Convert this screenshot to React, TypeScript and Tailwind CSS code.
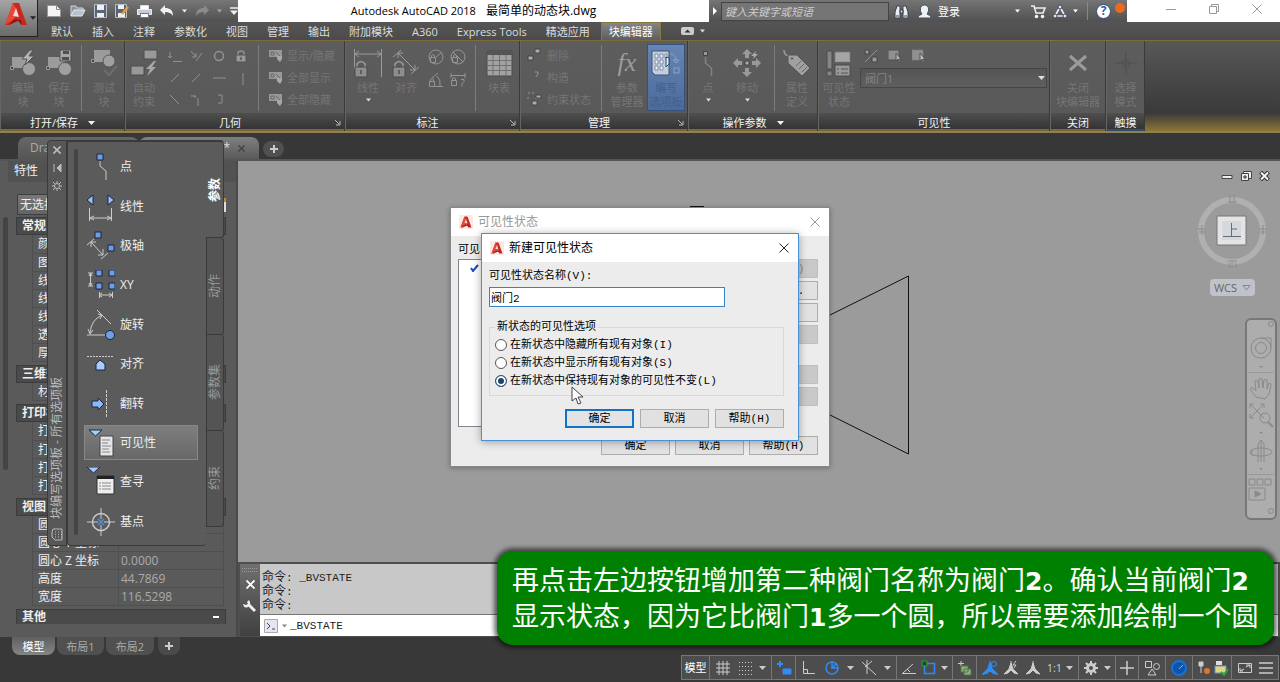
import React, { useState } from 'react';

type IconProps = { w?: number; h?: number; box?: string; className?: string; children: React.ReactNode };

const Icon = ({ w = 16, h = 16, box, className = '', children }: IconProps) => (
  <svg
    width={w}
    height={h}
    viewBox={box ?? `0 0 ${w} ${h}`}
    fill="none"
    stroke="currentColor"
    className={`shrink-0 ${className}`}
    aria-hidden="true"
  >
    {children}
  </svg>
);

const Caret = ({ className = '' }: { className?: string }) => (
  <Icon w={7} h={4} className={className}>
    <path d="M0 0h7L3.500 4z" fill="currentColor" stroke="none" />
  </Icon>
);

const LogoA = ({ size = 16 }: { size?: number }) => (
  <Icon w={size} h={size} box="0 0 24 24">
    <path d="M1 23 9 1h6l8 22h-6l-2-5-5-1-4 6z" fill="#c9281e" stroke="none" />
    <path d="M9 1 1 23l9-6 3-9z" fill="#e5473a" stroke="none" />
    <path d="m12 6 3 9-6-1z" fill="#f7d9d4" stroke="none" />
    <path d="m5 23 5-6 7 1 1 5-4-4z" fill="#8e1710" stroke="none" />
  </Icon>
);

const Close = ({ size = 10, width = 1 }: { size?: number; width?: number }) => (
  <Icon w={size} h={size} box="0 0 10 10">
    <path d="m.5.5 9 9m0-9-9 9" strokeWidth={width} />
  </Icon>
);

/* ---------- title bar ---------- */

const QuickAccess = () => (
  <div className="flex w-[200px] shrink-0 items-center gap-2 bg-linear-to-b from-[#777] to-[#505050] pl-2 text-[#eee]">
    <button aria-label="新建"><Icon w={16} h={14}><path d="M1.500 1.500h9l4 4v7h-13z" fill="#f4f4f4" stroke="#999" /><path d="M10.500 1.500v4h4" stroke="#888" /></Icon></button>
    <button aria-label="打开"><Icon w={16} h={14}><path d="M1 12V2h5l1 2h6v2" fill="#8b93a0" stroke="#d0d6de" /><path d="m1 12 3-6h11l-3 6z" fill="#b9c1cc" stroke="#e6e9ee" /></Icon></button>
    <button aria-label="保存"><Icon w={13} h={14}><path d="M.5.5h12v13H.5z" fill="#5b6575" stroke="#b9c0cc" /><path d="M3 1h7v5H3zM3 9h7v4H3z" fill="#f0f0f0" stroke="none" /></Icon></button>
    <button aria-label="另存为"><Icon w={14} h={14}><path d="M.5.500h11v13H.5z" fill="#5b6575" stroke="#b9c0cc" /><path d="M3 1h6v4H3zM3 9h7v4H3z" fill="#f0f0f0" stroke="none" /><path d="m13 3-6 7" stroke="#e2a23a" strokeWidth="2.500" /></Icon></button>
    <button aria-label="打印"><Icon w={15} h={14}><path d="M3.500 5V1.500h8V5" fill="#fff" stroke="#ddd" /><path d="M.5 5.500h14v5H.5z" fill="#c5ccd6" stroke="#eee" /><path d="M3.500 9.500h8v4h-8z" fill="#fff" stroke="#6b7686" /></Icon></button>
    <button aria-label="放弃" className="flex items-center gap-2"><Icon w={14} h={12}><path d="M5 0v3c5 0 8 2 8 8-2-3-4-4-8-4v3L0 5z" fill="#f2f2f2" stroke="none" /></Icon><Caret className="w-[5px]" /></button>
    <button aria-label="重做" className="flex items-center gap-2 text-[#aaa]"><Icon w={14} h={12}><path d="M9 0v3C4 3 1 5 1 11c2-3 4-4 8-4v3l5-5z" fill="#8b8b8b" stroke="none" /></Icon><Caret className="w-[5px]" /></button>
    <button aria-label="自定义"><Icon w={8} h={8}><path d="M0 1h8" strokeWidth="1.500" /><path d="M0 3.500h8L4 8z" fill="currentColor" stroke="none" /></Icon></button>
  </div>
);

const InfoCenter = () => (
  <div className="flex w-[418px] shrink-0 items-center bg-linear-to-b from-[#757575] to-[#505050] text-white">
    <button aria-label="展开搜索" className="flex w-3 justify-center"><Icon w={4} h={8}><path d="M0 0v8l4-4z" fill="currentColor" stroke="none" /></Icon></button>
    <input
      aria-label="搜索"
      placeholder="键入关键字或短语"
      className="h-[19px] w-[168px] border border-[#444] bg-[#757575] px-[3px] text-[11px] italic leading-none placeholder:text-[#ccc]"
    />
    <button aria-label="查找" className="ml-[5px]"><Icon w={15} h={15}><path d="M1 14V8l2-6h3v12zM14 14V8l-2-6H9v12zM6 6h3v3H6z" fill="#e9edf4" stroke="#3d4450" /><path d="M2 12h3m5 0h3" stroke="#3d4450" /></Icon></button>
    <button className="ml-2 flex items-center gap-[6px] text-[11px] leading-none">
      <Icon w={15} h={15}><path d="M1 14c0-3 3-3 4-4-2-2-3-9 2.500-9S12 8 10 10c1 1 4 1 4 4z" fill="#eef1f6" stroke="#454d5b" /></Icon>
      登录
    </button>
    <button aria-label="登录选项" className="ml-[55px]"><Caret className="w-[5px]" /></button>
    <button aria-label="购物车" className="ml-[10px]"><Icon w={16} h={15}><path d="M1 2h3l2 7h7l2-5H5" stroke="#e9edf4" strokeWidth="1.600" /><circle cx="6.500" cy="12.500" r="1.300" fill="#fff" /><circle cx="12.500" cy="12.500" r="1.300" fill="#fff" /></Icon></button>
    <button aria-label="应用" className="ml-[6px] flex items-center gap-[5px]">
      <Icon w={16} h={15}><path d="M8 3 3 12h10z" stroke="#e9edf4" strokeWidth="1.600" /><circle cx="8" cy="3" r="2" fill="#dfe5f2" stroke="#3d4668" /><circle cx="3" cy="12" r="2" fill="#dfe5f2" stroke="#3d4668" /><circle cx="13" cy="12" r="2" fill="#dfe5f2" stroke="#3d4668" /></Icon>
      <Caret className="w-[5px]" />
    </button>
    <span className="ml-[9px] h-[18px] w-px bg-[#888]" />
    <button aria-label="帮助" className="ml-2 flex h-[15px] w-[15px] items-center justify-center rounded-full border border-[#2b4a72] bg-white text-[12px] font-bold leading-none text-[#1f5fae]">?</button>
    <span className="mb-[7px] ml-1 h-[10px] w-[10px] rounded-full bg-[#ea6a20]" />
  </div>
);

const MENU = ['默认', '插入', '注释', '参数化', '视图', '管理', '输出', '附加模块', 'A360', 'Express Tools', '精选应用'];

const Header = () => (
  <header className="flex h-10 bg-[#4b4b4b]">
    <button aria-label="应用程序菜单" className="flex h-[37px] w-[38px] shrink-0 items-start gap-[2px] border-b border-r border-[#222] bg-linear-to-b from-[#a5a5a5] to-[#6a6a6a] pl-1 pt-[2px] text-[#222]">
      <LogoA size={24} />
      <Caret className="mt-[14px] w-[6px]" />
    </button>
    <div className="flex min-w-0 flex-1 flex-col">
      <div className="flex h-[22px] bg-white">
        <QuickAccess />
        <h1 className="flex min-w-0 flex-1 items-center justify-center gap-[10px] whitespace-nowrap pb-px text-[12px] leading-none text-black">
          <span className="text-[11px]">Autodesk AutoCAD 2018</span>
          <span>最简单的动态块.dwg</span>
        </h1>
        <InfoCenter />
        <div className="flex w-[153px] shrink-0 items-center justify-between pb-1 pl-[39px] pr-[18px] text-[#999]">
          <button aria-label="最小化"><Icon w={10} h={10}><path d="M0 5.500h10" /></Icon></button>
          <button aria-label="还原"><Icon w={10} h={10}><path d="M.5 2.500h7v7h-7zM2.500 2.500v-2h7v7h-2" /></Icon></button>
          <button aria-label="关闭"><Close /></button>
        </div>
      </div>
      <nav className="flex h-[18px] gap-[3px] bg-linear-to-b from-[#555] to-[#4b4b4b] pl-[5px] text-[11px] leading-none text-[#ddd]">
        {MENU.map((m) => (
          <button key={m} className="px-2">{m}</button>
        ))}
        <button className="border border-b-0 border-[#8a7440] bg-linear-to-b from-[#858585] to-[#5e5e5e] px-[7px] text-white">块编辑器</button>
        <button aria-label="最小化功能区" className="ml-[17px] flex items-center gap-[6px]">
          <Icon w={13} h={8}><rect width="13" height="8" rx="2" fill="#ccc" stroke="none" /><path d="M3.500 5.500h6l-3-3z" fill="#333" stroke="none" /></Icon>
          <Caret className="w-[5px]" />
        </button>
      </nav>
    </div>
  </header>
);

/* ---------- ribbon ---------- */

type PanelProps = { title: string; width: string; corner?: boolean; drop?: boolean; blue?: boolean; children: React.ReactNode };

const Panel = ({ title, width, corner, drop, blue, children }: PanelProps) => (
  <section className={`flex shrink-0 flex-col border-r border-r-[#3a3a3a] border-l border-l-[#656565] ${width}`}>
    <div className="flex flex-1 bg-linear-to-b from-[#5d5d5d] to-[#595959]">{children}</div>
    <h2
      className={`flex h-[18px] items-center border-b-2 bg-linear-to-b from-[#4f4f4f] to-[#343434] pt-[3px] text-[11px] leading-none text-[#f2f2f2] ${
        blue ? 'border-b-[#33506a]' : 'border-b-[#7b673a]'
      }`}
    >
      <span className="flex flex-1 items-center justify-center gap-[10px]">{title}{drop && <Caret />}</span>
      {corner && <Icon w={7} h={7} className="mr-[3px] text-[#bbb]"><path d="m1 1 4 4M6 2v4H2" /></Icon>}
    </h2>
  </section>
);

type BigProps = { lines: string[]; width: string; caret?: boolean; active?: boolean; children: React.ReactNode };

const Big = ({ lines, width, caret, active, children }: BigProps) => (
  <button
    className={`flex shrink-0 flex-col items-center whitespace-nowrap text-[11px] leading-[14px] ${width} ${
      active
        ? 'mb-[2px] mt-[3px] border border-[#35527c] bg-linear-to-b from-[#6685b3] to-[#4c6a9a] pt-[3px] text-[#43618d]'
        : 'pt-[7px] text-[#757575]'
    }`}
  >
    <span className={`flex h-[30px] items-center ${active ? 'text-[#c2d0e4]' : 'text-[#9b9b9b]'}`}>{children}</span>
    <span className="mt-[3px]">{lines[0]}</span>
    {lines[1] && <span>{lines[1]}</span>}
    {caret && <Caret className="mt-[3px] w-[5px] text-[#ddd]" />}
  </button>
);

const Sep = () => <span className="mb-[2px] mt-1 w-px shrink-0 bg-[#7c7c7c]" />;

const Row = ({ label, children }: { label: string; children: React.ReactNode }) => (
  <button className="flex h-[22px] items-center gap-1 whitespace-nowrap text-[11px] leading-none text-[#757575]">
    <span className="text-[#959595]">{children}</span>
    {label}
  </button>
);

const geometry = [
  <path d="M2 3v6m-2-2 2 2 2-2M5 12.500h9" />,
  <path d="m1 2 5 6m0-4v4H2m4 4 6-8" />,
  <circle cx="7" cy="7" r="4.500" strokeWidth="1.500" />,
  <><path d="M4 6V4q0-2 3-2t3 2v2" strokeWidth="1.500" /><path d="M2 6h10v7H2z" fill="#9a9a9a" stroke="#555" /><path d="M7 8v3" stroke="#333" /></>,
  <path d="m3 11 8-8" />,
  <path d="m2 11 8-8" />,
  <path d="M1 7h13" />,
  <path d="M9 2v12" />,
  <path d="m2 2 9 9" />,
  <path d="M1 3h5m2 2v8M5 3v2" />,
  <path d="M6 2h4v8H6" />,
];

const dims = [
  <><circle cx="8" cy="8" r="7" /><path d="M2.500 8.500h5v5h-5zM3.500 8V6.500q1.500-2 3 0V8M8 8l5-4" /></>,
  <><circle cx="8" cy="8" r="7" /><path d="M2.500 8.500h5v5h-5zM3.500 8V6.500q1.500-2 3 0V8M3 3l10 10" /></>,
  <path d="M1.500 9.500h5v5h-5zM2.500 9V7.500q1.500-2 3 0V9M4 6l6-5m-1 3q4 4 3 10M7 14.500h8" />,
  <path d="M1.500 8.500h5v5h-5zM2.500 8V6.500q1.500-2 3 0V8M1 1v5m14-5v5M1 3.500h14m-4 4h3v2l-2 2v3" />,
];

const BlockShape = ({ extra }: { extra: React.ReactNode }) => (
  <Icon w={28} h={28}>
    <path d="M3 8h17v11H3z" fill="#9b9b9b" stroke="none" />
    <circle cx="20" cy="20" r="6.500" fill="#a0a0a0" stroke="#5b5b5b" />
    <path d="M1.500 17.500h3v3h-3z" fill="#444" />
    {extra}
  </Icon>
);

const EyeBlock = () => (
  <Icon w={14} h={13}>
    <path d="M0 1h13v7H0z" fill="#989898" stroke="none" />
    <path d="M2 3h3v3H2zM7 3l4 4" stroke="#6a6a6a" />
    <path d="M8 7h5v3l-2 3-3-3z" fill="#a8a8a8" stroke="none" />
  </Icon>
);

const Ribbon = () => {
  const [state, setState] = useState('阀门1');
  return (
    <div className="flex h-[93px] border-b-2 border-t border-b-[#8f8055] border-t-[#7d6b3d] bg-[#5b5b5b]">
      <Panel title="打开/保存" width="w-[125px]" drop>
        <Big lines={['编辑', '块']} width="ml-1 w-9">
          <BlockShape extra={<path d="m21 1-8 9h5l-2 6 9-9h-5l4-6z" fill="#b5b5b5" stroke="#555" />} />
        </Big>
        <Big lines={['保存', '块']} width="w-9">
          <BlockShape extra={<><path d="M15 1h11v11H15z" fill="#a6a6a6" stroke="#505050" /><path d="M18 2h6v3h-6zM17 8h7v3h-7z" fill="#4f4f4f" stroke="none" /></>} />
        </Big>
        <span className="w-1" /><Sep /><span className="w-1" />
        <Big lines={['测试', '块']} width="w-9">
          <Icon w={28} h={28}>
            <path d="M4 1h16v12H4z" fill="#9b9b9b" stroke="none" />
            <path d="M1.500 10.500h3v3h-3z" fill="#444" />
            <circle cx="19" cy="12" r="6" fill="#a0a0a0" stroke="#5b5b5b" />
            <path d="m14 21 5 5 8-9" stroke="#6e6e6e" strokeWidth="2" />
          </Icon>
        </Big>
      </Panel>

      <Panel title="几何" width="w-[220px]" corner>
        <Big lines={['自动', '约束']} width="w-9">
          <Icon w={28} h={28}>
            <path d="M14 1h13v9H14zM1 17h13v9H1z" fill="#999" stroke="#4c4c4c" />
            <path d="m24 12-8 8h4l-3 7 9-9h-4l4-6z" fill="#a8a8a8" stroke="none" />
          </Icon>
        </Big>
        <div className="ml-[2px] grid grid-cols-4 content-start pt-1 text-[#929292]">
          {geometry.map((g, i) => (
            <button key={i} aria-label={`几何约束 ${i + 1}`} className="flex h-[22px] w-[22px] items-center justify-center">
              <Icon w={14} h={14}>{g}</Icon>
            </button>
          ))}
        </div>
        <span className="w-[6px]" /><Sep />
        <div className="ml-[10px] pt-[3px]">
          <Row label="显示/隐藏"><EyeBlock /></Row>
          <Row label="全部显示"><EyeBlock /></Row>
          <Row label="全部隐藏"><EyeBlock /></Row>
        </div>
      </Panel>

      <Panel title="标注" width="w-[175px]" corner>
        <Big lines={['线性']} width="ml-[2px] w-10" caret>
          <Icon w={30} h={29}>
            <path d="M1.500 0v20M28.500 0v28M2 5h26M6 2 2 5l4 3m18-6 4 3-4 3" />
            <path d="M4 18v-3q4-5 8 0v3" strokeWidth="1.500" />
            <path d="M2 18h12v10H2z" fill="#8d8d8d" stroke="#4b4b4b" /><path d="M8 21v4" stroke="#333" />
          </Icon>
        </Big>
        <Big lines={['对齐']} width="w-9">
          <Icon w={28} h={29}>
            <path d="m1 8 8-7m10 24 8-7M6 4l17 17M6 9V4h5m12 12v5h-5" />
            <path d="M3 18v-3q4-5 8 0v3" strokeWidth="1.500" />
            <path d="M1 18h12v10H1z" fill="#8d8d8d" stroke="#4b4b4b" /><path d="M7 21v4" stroke="#333" />
          </Icon>
        </Big>
        <div className="grid grid-cols-2 content-start pt-1 text-[#959595]">
          {dims.map((d, i) => (
            <button key={i} aria-label={`标注约束 ${i + 1}`} className="flex h-[23px] w-[23px] items-center justify-center">
              <Icon w={16} h={16}>{d}</Icon>
            </button>
          ))}
        </div>
        <span className="w-[6px]" /><Sep />
        <Big lines={['块表']} width="ml-[3px] w-10">
          <Icon w={27} h={27}>
            <path d="M1 1h25v25H1z" fill="#a2a2a2" stroke="#4a4a4a" />
            <path d="M1 1h25v4H1z" fill="#555" stroke="none" />
            <path d="M7 5v21m6.500-21v21M20 5v21M1 10.500h25M1 15.500h25M1 20.500h25" stroke="#707070" />
          </Icon>
        </Big>
      </Panel>

      <Panel title="管理" width="w-[168px]" corner>
        <div className="ml-[6px] w-[74px] pt-[3px]">
          <Row label="删除"><Icon w={16} h={14}><path d="M8 1h5v4H8zM1 8h5v4H1z" fill="#aaa" stroke="#444" /></Icon></Row>
          <Row label="构造"><Icon w={16} h={14}><path d="M8 2h3v2L9 7" /></Icon></Row>
          <Row label="约束状态"><Icon w={16} h={14}><path d="M1 1h2M5 1h2M1 5v2M13 3v3H9v3" strokeDasharray="2 1" /><path d="M9 3h5v3H9zM5 9h5v4H5z" fill="#aaa" stroke="#444" /></Icon></Row>
        </div>
        <Sep />
        <Big lines={['参数', '管理器']} width="ml-[5px] w-10">
          <span className="[font-family:'Liberation_Serif',serif] text-[26px] italic leading-none">fx</span>
        </Big>
        <Big lines={['编写', '选项板']} width="w-[38px]" active>
          <Icon w={30} h={28}>
            <path d="M1 2h17v24H4l-3-3z" fill="#c3cddc" stroke="#3d5477" />
            <path d="M4 5h3v4H4zM9 5h3v4H9zM14 5h2v4h-2zM4 11h3v4H4zM9 11h3v4H9zM4 17h3v4H4zM9 17h3v4H9z" fill="#eef2f8" stroke="#7e8fa9" />
            <path d="M15 8v10l3-3V9z" fill="#e6edf7" stroke="#2c456b" />
            <path d="M19 5q6 0 6 6m-3 0h6l-3 3zM23 19h5v5h-5z" stroke="#8ca4c8" />
          </Icon>
        </Big>
      </Panel>

      <Panel title="操作参数" width="w-[130px]" drop>
        <Big lines={['点']} width="w-[38px]" caret>
          <Icon w={12} h={28}><path d="M1.500 2.500h4v4h-4z" fill="#999" stroke="#444" /><path d="M3.500 8v6l6 5v8" stroke="#828282" strokeWidth="1.500" /></Icon>
        </Big>
        <Big lines={['移动']} width="w-10" caret>
          <Icon w={28} h={28}>
            <path d="m14 0 5 5h-3v4h-4V5H9zM14 28l5-5h-3v-4h-4v4H9zM0 14l5-5v3h4v4H5v3zM28 14l-5-5v3h-4v4h4v3z" fill="#999" stroke="none" />
            <path d="M12 12h4v4h-4z" fill="#aaa" stroke="#444" />
            <path d="m23 2-5 5h3l-1 3 5-5h-3z" fill="#aaa" stroke="none" />
          </Icon>
        </Big>
        <span className="w-[7px]" /><Sep />
        <Big lines={['属性', '定义']} width="ml-[3px] w-[38px]">
          <Icon w={28} h={28}>
            <path d="M1 1q0 6 6 6" strokeWidth="1.500" />
            <path d="M5 6h9l13 13-8 8L5 14z" fill="#a0a0a0" stroke="#555" />
            <circle cx="9" cy="9.500" r="1.500" fill="#555" />
            <path d="m13 17 5-5m-2 8 5-5m-2 8 5-5" stroke="#666" />
          </Icon>
        </Big>
      </Panel>

      <Panel title="可见性" width="w-[232px]">
        <Big lines={['可见性', '状态']} width="ml-[2px] w-9">
          <Icon w={26} h={27}>
            <path d="M1 1h5v18H1zM1 21h5v5H1z" fill="#858585" stroke="#4c4c4c" />
            <path d="M9 2h15v10H9z" fill="#a5a5a5" stroke="#777" strokeDasharray="2 1" />
            <path d="M9 15h15v11H9z" fill="#999" stroke="#4c4c4c" />
            <path d="M11 19h2m2 0h7m-11 4h2m2 0h7" stroke="#555" />
          </Icon>
        </Big>
        <div className="ml-[3px] flex flex-1 flex-col pr-[2px] pt-[6px]">
          <div className="flex h-[18px] items-center gap-[10px] pl-1 text-[#8f8f8f]">
            <button aria-label="可见性模式"><Icon w={14} h={14}><path d="m1 13 12-12" /><path d="M1 1h4v4H1zM8 8h5v5H8z" fill="#999" stroke="#444" /></Icon></button>
            <button aria-label="使可见"><Icon w={14} h={14}><path d="M0 1h11v10H0z" fill="#909090" stroke="#505050" /><path d="M8 4v8l2-2 2 4 1-1-2-3h2z" fill="#b5b5b5" stroke="#555" /></Icon></button>
            <button aria-label="使不可见"><Icon w={14} h={14}><path d="M0 1h11v10H0z" fill="#909090" stroke="#808080" strokeDasharray="2 1" /><path d="M8 4v8l2-2 2 4 1-1-2-3h2z" fill="#c5c5c5" stroke="#555" /></Icon></button>
          </div>
          <label className="relative mt-[3px] flex items-center">
            <select
              aria-label="可见性状态"
              value={state}
              onChange={(e) => setState(e.target.value)}
              className="h-5 w-full appearance-none border border-[#464646] bg-linear-to-b from-[#555] to-[#5f5f5f] px-1 text-[11px] leading-none text-[#858585]"
            >
              <option>阀门1</option>
            </select>
            <Caret className="pointer-events-none absolute right-[2px] text-[#ddd]" />
          </label>
        </div>
      </Panel>

      <Panel title="关闭" width="w-14">
        <Big lines={['关闭', '块编辑器']} width="w-[54px]">
          <Icon w={20} h={18}><path d="m2 2 16 14M18 2 2 16" strokeWidth="3" /></Icon>
        </Big>
      </Panel>
      <Panel title="触摸" width="w-[39px]" blue>
        <Big lines={['选择', '模式']} width="w-[37px]">
          <Icon w={24} h={24} className="text-[#515151]"><path d="M12 1v22M1 12h22" strokeWidth="1.500" /><path d="M9 9h6v6H9z" /></Icon>
        </Big>
      </Panel>
      <div className="flex-1 bg-linear-to-b from-[#585858] via-[#3a3a3a] via-80% to-[#8f7532]" />
    </div>
  );
};

/* ---------- document tabs and properties ---------- */

const DocTabs = () => (
  <div className="flex h-7 items-end border-b-2 border-[#555] bg-[#373737] pl-[18px] text-[12px] leading-none text-[#aaa]">
    <button className="h-[22px] w-[121px] rounded-t-lg bg-linear-to-b from-[#676767] to-[#555] pl-3 text-left">Drawing1</button>
    <button className="flex h-[22px] w-[120px] items-center justify-end gap-2 rounded-t-lg bg-linear-to-b from-[#808080] to-[#5a5a5a] pr-[14px] text-[#ddd]">
      最简单的动态块*
      <span className="text-[#444]"><Close size={7} width={2} /></span>
    </button>
    <button aria-label="新图形" className="mb-[2px] ml-1 flex h-4 w-[21px] items-center justify-center rounded-lg bg-[#505050] text-[#ccc]">
      <Icon w={8} h={8}><path d="M4 0v8M0 4h8" strokeWidth="2" /></Icon>
    </button>
  </div>
);

type Prop = [string, string];

const PROPS: { title: string; rows: Prop[] }[] = [
  { title: '常规', rows: [['颜色', ''], ['图层', ''], ['线型', ''], ['线型比例', ''], ['线宽', ''], ['透明度', ''], ['厚度', '']] },
  { title: '三维效果', rows: [['材质', '']] },
  { title: '打印样式', rows: [['打印样式', ''], ['打印样式表', ''], ['打印表附着', ''], ['打印表类型', '']] },
  { title: '视图', rows: [['圆心 X 坐标', ''], ['圆心 Y 坐标', ''], ['圆心 Z 坐标', '0.0000'], ['高度', '44.7869'], ['宽度', '116.5298']] },
];

const Properties = () => (
  <aside className="flex w-[238px] shrink-0 flex-col border-r-2 border-[#4a4a4a] bg-[#5a5a5a] text-[12px] text-[#eee]">
    <h2 className="ml-2 h-[21px] bg-[#525252] pl-[6px] leading-[19px]">特性</h2>
    <div className="mt-3 flex pl-[17px]">
      <button className="h-[21px] w-[183px] border border-[#3f3f3f] bg-linear-to-b from-[#777] to-[#646464] pl-[2px] text-left leading-none">无选择</button>
      <span className="ml-[22px] mt-1 h-[14px] w-1 border-t-4 border-t-[#c58a35] bg-[#ddd]" />
    </div>
    <div className="mt-[2px] flex">
      <span className="ml-[3px] h-[253px] w-[5px] shrink-0 rounded-sm bg-[#444]" />
      <div className="ml-2 flex w-[210px] flex-col gap-[3px]">
        {PROPS.map((g) => (
          <section key={g.title}>
            <h3 className="h-[18px] border border-[#3c3c3c] bg-[#4a4a4a] pl-[5px] font-bold leading-[16px]">{g.title}</h3>
            <table className="ml-4 w-[192px] table-fixed border-collapse border-r border-[#4f4f4f]">
              <tbody>
                {g.rows.map(([k, v]) => (
                  <tr key={k} className="h-[18px] border-b border-[#4f4f4f]">
                    <th scope="row" className="w-[86px] whitespace-nowrap border-x border-[#4f4f4f] p-0 pl-[5px] text-left font-normal leading-[17px]">{k}</th>
                    <td className="p-0 pl-[2px] leading-[17px] text-[#aaa]">{v}</td>
                  </tr>
                ))}
              </tbody>
            </table>
          </section>
        ))}
        <h3 className="flex h-[15px] items-center justify-between border border-b-0 border-[#3c3c3c] bg-[#4a4a4a] pl-[5px] pr-[6px] font-bold leading-none">
          其他
          <span className="h-[2px] w-[6px] bg-white" />
        </h3>
      </div>
    </div>
  </aside>
);

/* ---------- block authoring palette ---------- */

const N = '#6f9fe0';

const PARAMS: { label: string; icon: React.ReactNode }[] = [
  { label: '点', icon: <><path d="M13 9v5l6 5v9" /><path d="M10 2h6v6h-6z" fill={N} stroke="#16264a" /></> },
  { label: '线性', icon: <><path d="M2.500 16v13m22-13v13M3 26h21M7 24l-4 2 4 2m13-4 4 2-4 2" /><path d="m6 3-6 5 6 5zM21 3l6 5-6 5z" fill="#9cc3f5" stroke="#16264a" /></> },
  { label: '极轴', icon: <><path d="m0 14 7-6m7 20 7-6M4 11l12 13M4 16v-5h5m7 7v6h-5" /><path d="M8 1h6v6H8zM21 14h6v6h-6z" fill={N} stroke="#16264a" /></> },
  { label: 'XY', icon: <><path d="M1 3h5M1 16h5M3.500 3v13M2 6l1.500-3L5 6m-3 7 1.500 3L5 13M12.500 22v6m13-6v6M12 25h13m-10-2-3 2 3 2m7-4 3 2-3 2" /><path d="M9 0h6v6H9zM22 0h6v6h-6zM9 13h6v6H9zM22 13h6v6h-6z" fill={N} stroke="#16264a" /></> },
  { label: '旋转', icon: <><path d="M0 25h20M10 0l14 14M3 23Q4 10 15 5M1 19l2 5 3-4m5-16 4 1-2 4" /><circle cx="23" cy="25" r="4.500" fill={N} stroke="#16264a" /></> },
  { label: '对齐', icon: <><path d="M0 7.500h27" strokeDasharray="2 1" /><path d="M9 21v-6l4-4 5 4v6z" fill="#a9ccf8" stroke="#16264a" /></> },
  { label: '翻转', icon: <><path d="M19.500 1v28" strokeDasharray="3 1" /><path d="M5 12h6V9l6 6-6 6v-3H5z" fill="#8db8f2" stroke="#16264a" /></> },
  { label: '可见性', icon: <><path d="M13 8h13v20H13z" fill="#e5e5ea" stroke="#444" /><path d="M15 12h8m-8 3h6m-6 3h9m-9 3h7m-7 3h8" stroke="#888" /><path d="M2 2h13L8.500 8z" fill="#a9ccf8" stroke="#16264a" /></> },
  { label: '查寻', icon: <><path d="M10 9h17v18H10z" fill="#eee" stroke="#333" /><path d="M10 9h17v3H10z" fill="#222" stroke="none" /><path d="M12 16h2m1 0h9m-12 3h2m1 0h9m-12 3h2m1 0h9" stroke="#888" /><path d="M0 0h13L6.500 6z" fill="#a9ccf8" stroke="#16264a" /></> },
  { label: '基点', icon: <><circle cx="14" cy="15" r="8.500" strokeWidth="1.500" /><path d="M14 1v11m0 6v11M0 15h11m6 0h11" /><path d="m11 12 6 6m0-6-6 6" stroke="#4c8fe8" strokeWidth="1.500" /></> },
];

const VERTICAL = '[writing-mode:vertical-rl] [text-orientation:sideways] rotate-180';

const AuthoringPalette = () => {
  const [picked, setPicked] = useState('可见性');
  const [tab, setTab] = useState('参数');
  return (
    <div className="absolute left-[47px] top-[140px] z-10 flex h-[406px] text-[12px] leading-none text-[#eee]">
      <div className="flex w-5 flex-col items-center rounded-l border border-[#3a3a3a] bg-[#575757] pb-1 pt-[5px] text-[#bbb]">
        <button aria-label="关闭"><Close size={8} width={2} /></button>
        <button aria-label="自动隐藏" className="mt-[10px]"><Icon w={9} h={8}><path d="M1 0v8M8 0 4 4l4 4z" fill="currentColor" /></Icon></button>
        <button aria-label="特性" className="mt-[9px]"><Icon w={10} h={10}><circle cx="5" cy="5" r="2.500" /><path d="M5 0v2m0 6v2M0 5h2m6 0h2M1 1l2 2m4 4 2 2m0-8L7 3M3 7 1 9" /></Icon></button>
        <h2 className={`mt-auto whitespace-nowrap ${VERTICAL}`}>块编写选项板 - 所有选项板</h2>
        <Icon w={12} h={13} className="mt-[9px]"><path d="M2 1h9v11H4L1 9V4z" /><path d="M4 4h1m2 0h1m2 0h1M4 6.500h1m2 0h1m2 0h1M4 9h1m2 0h1m2 0h1" /></Icon>
      </div>
      <div className="flex w-[139px] rounded-b border border-r-0 border-[#3a3a3a] border-t-2 bg-[#5b5b5b] pb-1 pt-[5px]">
        <span className="mb-[6px] ml-[6px] mt-[2px] w-1 rounded bg-[#444]" />
        <div className="ml-[6px] flex w-[114px] flex-col">
          {PARAMS.map((p) => (
            <button
              key={p.label}
              onClick={() => setPicked(p.label)}
              className={`flex flex-1 items-center gap-[5px] border-y-2 border-[#5b5b5b] pl-[3px] pt-px ${
                picked === p.label ? 'bg-linear-to-b from-[#7f7f7f] to-[#676767] shadow-[inset_0_0_0_1px_#888]' : ''
              }`}
            >
              <Icon w={28} h={30} className="text-[#ccc]">{p.icon}</Icon>
              {p.label}
            </button>
          ))}
        </div>
      </div>
      <div role="tablist" className="flex h-[387px] w-[18px] flex-col rounded-r border-t-2 border-[#3a3a3a]">
        {['参数', '动作', '参数集', '约束'].map((t) => (
          <button
            key={t}
            role="tab"
            aria-selected={tab === t}
            onClick={() => setTab(t)}
            className={`flex flex-1 items-center justify-center rounded-r border-b border-r border-[#3a3a3a] ${
              tab === t ? 'bg-[#5b5b5b] font-bold text-white' : 'border-l bg-[#545454] text-[#9a9a9a]'
            }`}
          >
            <span className={VERTICAL}>{t}</span>
          </button>
        ))}
      </div>
    </div>
  );
};

/* ---------- drawing area ---------- */

const ViewCube = () => (
  <Icon w={70} h={74}>
    <circle cx="35" cy="37" r="31" stroke="#b0b0b0" strokeWidth="6" />
    <path d="M20 22h29v29H20z" fill="#e4e4e4" stroke="#777" />
    <path d="M25 27h19v19H25z" fill="#d5d8dd" stroke="none" />
    <path d="M34.500 29v13M26 42.500h18M35 35h5" stroke="#646b76" />
    <path d="M33 1v8m4-8v8m-6-1h9M1 35h7m-6 3h7m-4-7v10M62 35h8m-7 3h6m-3-7v10M31 67h9m-8 2v6m3-7v7m4-6v6" stroke="#8b8b8b" />
  </Icon>
);

const NavBar = () => (
  <div className="absolute right-[3px] top-[157px] flex h-[202px] w-8 flex-col items-center rounded-md border-2 border-[#777] bg-[#adadad] text-[#8a8a8a]">
    <Icon w={28} h={196}>
      <circle cx="24" cy="4" r="2.500" />
      <path d="M4 28a10 10 0 1 1 10 10Q4 38 4 28zM14 18h10v10" />
      <circle cx="14" cy="28" r="5.500" />
      <path d="M12 46h4l-2 2zM12 112h4l-2 2zM12 148h4l-2 2z" fill="currentColor" stroke="none" />
      <path d="M1 52.500h26M1 154.500h26" stroke="#9b9b9b" />
      <path d="m9 77-6-8q1-2 3-1l3 3-1-10q2-1 3 0l1 7V59q2-1 3 0l1 9 1-8q2-1 3 0v9l2-6q2 0 2 2l-2 9-4 5z" />
      <path d="m3 84 14 14M17 84 3 98M3 88v-4h4m6 0h4v4M3 94v4h4" /><circle cx="18" cy="98" r="5" /><path d="m21 102 5 5" strokeWidth="2" />
      <path d="M14 120v22m-3 0v-18l3-4 3 4v18" /><ellipse cx="14" cy="132" rx="11" ry="4" /><path d="m6 131-3 2 3 3" />
      <path d="M2 159h6v6H2zM10 159h6v6h-6zM18 159h6v6h-6zM2 168h16v12H2z" /><path d="m8 171 6 3-6 3z" fill="currentColor" />
      <circle cx="24" cy="191" r="2.500" />
    </Icon>
  </div>
);

const Canvas = () => (
  <div className="relative flex-1 bg-[#9b9b9b]">
    <svg className="absolute left-[440px] top-[40px]" width="240" height="260" fill="none" stroke="#111" aria-hidden="true">
      <path d="M12 6h14" strokeWidth="2" />
      <path d="m144 118 86.500-43v178L144 210" />
    </svg>
    <div className="absolute right-[10px] top-[10px] flex gap-[7px] text-[#f4f4f4]">
      <button aria-label="最小化"><Icon w={12} h={10}><path d="M1 4.500h10v3H1z" fill="#eee" stroke="#444" /></Icon></button>
      <button aria-label="还原"><Icon w={12} h={10}><path d="M3.500.500h8v7h-8z" fill="#eee" stroke="#444" /><path d="M1.500 2.500h7v7h-7z" fill="#eee" stroke="#444" /><path d="M4 5h2v2H4z" stroke="#333" /></Icon></button>
      <button aria-label="关闭"><Icon w={11} h={10}><path d="m1.500 1 8 8m0-8-8 8" stroke="#333" strokeWidth="4" /><path d="m2 1.500 7 7m0-7-7 7" strokeWidth="2" /></Icon></button>
    </div>
    <div className="absolute right-[13px] top-[33px]"><ViewCube /></div>
    <button className="absolute right-[25px] top-[118px] flex h-[17px] items-center gap-[5px] rounded bg-[#bfc2ca] px-[4px] text-[11px] leading-none text-[#666]">
      WCS
      <Icon w={9} h={6}><path d="M1 .5h7L4.500 5z" stroke="#888" /></Icon>
    </button>
    <NavBar />
  </div>
);

const Prompt = ({ text }: { text?: string }) => (
  <p className="h-[14px] whitespace-pre leading-[14px]"><span className="text-[12px]">命令</span>: {text}</p>
);

const CommandLine = () => (
  <div className="flex h-[75px] border-2 border-b border-[#4f4f4f] [font-family:'Liberation_Mono','Noto_Sans_CJK_SC',monospace] text-[11px] text-[#222]">
    <div className="flex w-5 shrink-0 flex-col items-center bg-linear-to-b from-[#707070] to-[#404040] pt-1 text-white">
      <Icon w={16} h={5} className="text-[#999]"><path d="M0 .5h16M0 3.500h16" strokeDasharray="1 1" /></Icon>
      <button aria-label="关闭" className="mt-[7px]"><Close size={9} width={2} /></button>
      <button aria-label="自定义" className="mt-[10px]"><Icon w={14} h={14}><path d="m5 5 7 7" stroke="#eee" strokeWidth="3" /><path d="M6 1 4 3l1 2-2 1-3-1q1 5 5 3 4-2 1-7z" fill="#eee" stroke="none" /></Icon></button>
    </div>
    <div className="flex flex-1 flex-col">
      <div className="flex-1 bg-[#c8c8c8] pl-[2px] pt-[7px]">
        <Prompt text="_BVSTATE" />
        <Prompt />
        <Prompt />
      </div>
      <label className="flex h-[22px] items-center border-t border-[#777] bg-white pl-1">
        <Icon w={14} h={14}><path d="M.5.500h13v13H.5z" fill="#e4e5ee" stroke="#aaa" /><path d="m3 4 3 3-3 3m5 0h3" stroke="#444" /></Icon>
        <Caret className="ml-1 w-[5px] text-[#888]" />
        <input aria-label="命令" defaultValue="_BVSTATE" className="ml-[3px] min-w-0 flex-1 leading-none outline-none" />
      </label>
    </div>
  </div>
);

/* ---------- dialogs ---------- */

const DlgButton = ({ label, primary, dim }: { label: string; primary?: boolean; dim?: boolean }) => (
  <button
    className={`h-[19px] w-[69px] whitespace-nowrap pt-px leading-none ${
      primary
        ? 'border-2 border-[#1472c4] bg-[#e3e3e3]'
        : dim
          ? 'border border-[#bfbfbf] bg-[#c9c9c9] text-[#888]'
          : 'border border-[#adadad] bg-[#e1e1e1]'
    }`}
  >
    {label}
  </button>
);

const DlgTitle = ({ text, dim }: { text: string; dim?: boolean }) => (
  <div className="flex h-7 items-center bg-white pl-[8px] pr-[9px] text-[12px] leading-none">
    <span className="bg-[#fbe9e6] p-px"><LogoA size={12} /></span>
    <h2 className={`ml-[5px] flex-1 [font-family:'Open_Sans','Noto_Sans_CJK_SC',sans-serif] ${dim ? 'text-[#999]' : 'text-black'}`}>{text}</h2>
    <button aria-label="关闭" className={dim ? 'text-[#999]' : 'text-[#222]'}><Close /></button>
  </div>
);

const DLG_FONT = "[font-family:'Liberation_Mono','Noto_Sans_CJK_SC',monospace] text-[11px] text-black";

const VisibilityDialog = () => (
  <div role="dialog" className={`absolute left-[450px] top-[207px] z-20 flex h-[260px] w-[380px] flex-col border border-[#888] bg-[#ececec] shadow-[0_1px_5px_rgba(0,0,0,0.3)] ${DLG_FONT}`}>
    <DlgTitle text="可见性状态" dim />
    <div className="flex flex-1 justify-between pl-[7px] pr-[11px] pt-[6px]">
      <div className="flex-1">
        <p className="leading-[17px]">可见</p>
        <div className="h-[168px] w-[270px] border border-[#828790] bg-white pl-[11px] pt-1">
          <Icon w={9} h={8}><path d="m1 4 2 3 5-6" stroke="#1b49c0" strokeWidth="2" /></Icon>
        </div>
      </div>
      <div className="flex flex-col gap-[3px] pt-[17px]">
        <DlgButton label="当前(C)" dim />
        <DlgButton label="新建..." />
        <DlgButton label="重命名" />
        <DlgButton label="删除" dim />
        <span className="h-[15px]" />
        <DlgButton label="上移" dim />
        <DlgButton label="下移" dim />
      </div>
    </div>
    <div className="flex justify-end gap-[5px] pb-[11px] pr-[11px]">
      <DlgButton label="确定" />
      <DlgButton label="取消" />
      <DlgButton label="帮助(H)" />
    </div>
  </div>
);

const OPTIONS = ['在新状态中隐藏所有现有对象(I)', '在新状态中显示所有现有对象(S)', '在新状态中保持现有对象的可见性不变(L)'];

const NewStateDialog = () => {
  const [name, setName] = useState('阀门2');
  const [mode, setMode] = useState(2);
  return (
    <div role="dialog" className={`absolute left-[481px] top-[233px] z-30 flex h-[208px] w-[318px] flex-col border border-[#4a90d9] bg-[#ececec] shadow-[0_1px_8px_rgba(0,0,0,0.35)] ${DLG_FONT}`}>
      <DlgTitle text="新建可见性状态" />
      <div className="flex flex-1 flex-col pb-3 pl-[7px] pr-[14px] pt-[7px]">
        <label htmlFor="state-name" className="leading-[15px]">可见性状态名称(V):</label>
        <input
          id="state-name"
          value={name}
          onChange={(e) => setName(e.target.value)}
          className="mt-[3px] h-5 w-[236px] border border-[#3584c9] bg-white px-px leading-none outline-none"
        />
        <fieldset className="mt-[13px] h-[76px] border border-[#d8d8d8] pl-[5px]">
          <legend className="px-[2px] leading-[14px]">新状态的可见性选项</legend>
          <div className="flex flex-col pt-[2px]">
            {OPTIONS.map((o, i) => (
              <label key={o} className="flex h-[18px] items-center gap-[3px] whitespace-nowrap leading-none">
                <input
                  type="radio"
                  name="mode"
                  checked={mode === i}
                  onChange={() => setMode(i)}
                  className="h-3 w-3 shrink-0 appearance-none rounded-full border border-[#555] bg-white checked:border-[#2a5580] checked:bg-[#1d4468] checked:shadow-[inset_0_0_0_2px_#fff]"
                />
                {o}
              </label>
            ))}
          </div>
        </fieldset>
        <div className="mt-auto flex justify-end gap-[6px]">
          <DlgButton label="确定" primary />
          <DlgButton label="取消" />
          <DlgButton label="帮助(H)" />
        </div>
      </div>
      <svg className="absolute left-[89px] top-[152px]" width="14" height="19" aria-hidden="true">
        <path d="M1 1v14l4-3 2 6 3-1-3-6h5z" fill="#fff" stroke="#444" />
      </svg>
    </div>
  );
};

/* ---------- footer ---------- */

const Group = ({ width, children }: { width: string; children: React.ReactNode }) => (
  <div className={`flex shrink-0 items-center justify-around border-r border-[#777] px-[2px] ${width}`}>{children}</div>
);

const Tool = ({ name, on, children }: { name: string; on?: boolean; children: React.ReactNode }) => (
  <button aria-label={name} className={on ? 'text-[#2f8cf5]' : ''}><Icon>{children}</Icon></button>
);

const figure = 'M8 1v7m0-5 2 6 5 5-4-1-3-3-3 3-4 1 5-5z';

const StatusBar = () => (
  <div className="ml-auto mr-px flex h-[25px] w-fit border border-[#777] bg-[#4d4d4d] text-[11px] leading-none text-[#ccc]">
    <Group width="w-7"><button className="whitespace-nowrap text-white">模型</button></Group>
    <Group width="w-[62px]">
      <Tool name="栅格"><path d="M4 1v14m4-14v14m4-14v14M1 4h14M1 8h14M1 12h14" /></Tool>
      <Tool name="捕捉"><path d="M2 2.500h13M2 6.500h13M2 10.500h13M2 14.500h13" strokeDasharray="1 2" /></Tool>
      <Caret />
    </Group>
    <Group width="w-6"><Tool name="动态输入" on><path d="M4 1v6M1 4h6" strokeWidth="2" /><path d="M7 9h8v5H7z" fill="currentColor" /></Tool></Group>
    <Group width="w-[101px]">
      <Tool name="正交"><path d="M2.500 1v12.500H14M2 9.500h4.500V13" /></Tool>
      <Tool name="极轴" on><circle cx="8" cy="8" r="6" strokeWidth="1.500" /><path d="M8 2v6h7M8 8l4-4" strokeWidth="1.500" /></Tool>
      <Caret />
      <Tool name="等轴测"><path d="m1 2 14 13M6 0v14M11 1 4 7" /></Tool>
      <Caret />
    </Group>
    <Group width="w-14">
      <Tool name="对象追踪"><path d="M1 13.500h14M2 13 12 4M6 9l3 3" /></Tool>
      <Tool name="对象捕捉" on><path d="M3.500 3.500h10v10h-10z" strokeWidth="1.500" /><path d="M1 1h5v5H1z" fill="#194d23" stroke="#27a148" /></Tool>
      <Caret />
    </Group>
    <Group width="w-6"><Tool name="选择循环"><path d="M4 1v5M1 3.500h6" /><path d="M4 6h7v6H4zM7 9h7v6H7z" fill="#8db37a" stroke="#55704a" /></Tool></Group>
    <Group width="w-[102px]">
      <Tool name="注释可见性" on><path d={figure} fill="currentColor" strokeWidth="1.500" /><circle cx="12" cy="4" r="2.500" /></Tool>
      <Tool name="自动缩放"><path d={figure} fill="currentColor" /><path d="m13 1-3 4h3l-2 3" /></Tool>
      <Tool name="注释"><path d={figure} fill="currentColor" /></Tool>
      <button className="flex items-center gap-1 whitespace-nowrap">1:1 <Caret /></button>
    </Group>
    <Group width="w-[37px]">
      <Tool name="切换工作空间"><circle cx="8" cy="8" r="3.500" strokeWidth="3" /><path d="M8 1v3m0 8v3M1 8h3m8 0h3M3 3l2 2m6 6 2 2m0-10-2 2M5 11l-2 2" strokeWidth="2" /></Tool>
      <Caret />
    </Group>
    <Group width="w-[23px]"><Tool name="注释监视器"><path d="M8 1v14M1 8h14" strokeWidth="1.500" /></Tool></Group>
    <Group width="w-[27px]"><Tool name="隔离对象"><path d="M1.500 1.500h6v6h-6zM8 9l4 6H4z" /><circle cx="12.500" cy="6.500" r="3" /></Tool></Group>
    <Group width="w-[27px]"><Tool name="硬件加速"><circle cx="8" cy="8" r="7" fill="#0d55ab" stroke="#1671d8" strokeWidth="2" /><path d="m8 9 4-4" stroke="#7db8ff" /></Tool></Group>
    <Group width="w-[39px]">
      <Tool name="通信"><path d="M5 2v11M3 2h4v4H3z" fill="currentColor" /><circle cx="11" cy="11" r="3" fill="#e0742c" stroke="none" /></Tool>
      <Tool name="外部参照"><path d="M2 6h11v7H2z" fill="#dfd57a" stroke="#6d91c4" /><path d="M3 1h6v4H3z" fill="#ddd" stroke="none" /><path d="m8 12 3 3 4-6" stroke="#2e9e3b" strokeWidth="2" /></Tool>
    </Group>
    <div className="flex w-[46px] items-center justify-around px-[2px]">
      <Tool name="全屏显示"><path d="M1.500 3.500h13v9h-13zM9 7l4-2m-4 0h4v3M7 9l-4 2m0-3v3h3" /></Tool>
      <Tool name="自定义"><path d="M1 3h14M1 8h14M1 13h14" strokeWidth="1.500" /></Tool>
    </div>
  </div>
);

const LayoutTabs = () => (
  <div className="flex h-[18px] gap-[2px] bg-[#383838] pl-3 text-[12px] leading-none text-[#aaa]">
    <button className="w-[43px] rounded-b-lg bg-linear-to-b from-[#606060] to-[#858585] text-[11px] text-white">模型</button>
    <button className="w-[47px] rounded-b-lg bg-[#505050] text-[11px]">布局1</button>
    <button className="w-[48px] rounded-b-lg bg-[#505050] text-[11px]">布局2</button>
    <button aria-label="新建布局" className="ml-[2px] flex w-[22px] items-center justify-center rounded-b-lg bg-[#4a4a4a] text-[#ccc]">
      <Icon w={8} h={8}><path d="M4 0v8M0 4h8" strokeWidth="2" /></Icon>
    </button>
  </div>
);

const Num = ({ children }: { children: string }) => (
  <span className="[font-family:'DejaVu_Sans',sans-serif] text-[25px] font-bold">{children}</span>
);

const Caption = () => (
  <div className="absolute left-[497px] top-[551px] z-40 whitespace-nowrap rounded-2xl bg-[#008000] py-[11px] pl-[15px] pr-4 text-[27px] font-normal leading-9 text-white shadow-[0_0_4px_3px_rgba(0,0,0,0.55)]">
    <p className="h-9">再点击左边按钮增加第二种阀门名称为阀门<Num>2</Num>。确认当前阀门<Num>2</Num></p>
    <p className="h-9">显示状态，因为它比阀门<Num>1</Num>多一个圆，所以需要添加绘制一个圆</p>
  </div>
);

export default function App() {
  return (
    <div className="relative flex min-h-screen w-full flex-col overflow-hidden bg-[#383838] [font-family:'Open_Sans','Noto_Sans_CJK_SC',sans-serif]">
      <Header />
      <Ribbon />
      <DocTabs />
      <main className="flex flex-1">
        <Properties />
        <div className="flex min-w-0 flex-1 flex-col">
          <Canvas />
          <CommandLine />
        </div>
      </main>
      <footer className="h-[45px]">
        <LayoutTabs />
        <StatusBar />
      </footer>
      <AuthoringPalette />
      <VisibilityDialog />
      <NewStateDialog />
      <Caption />
    </div>
  );
}
